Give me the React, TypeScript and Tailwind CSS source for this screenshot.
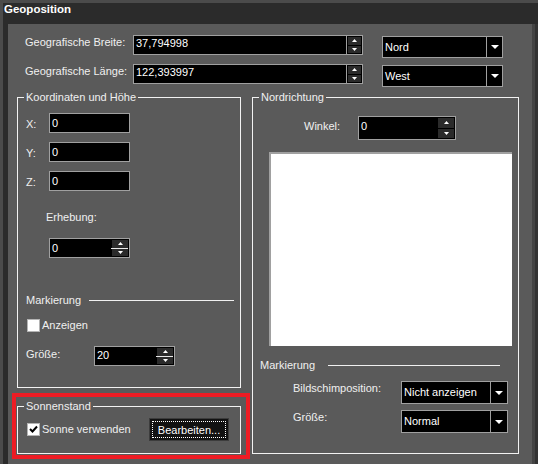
import React from 'react';

type Div = 'gap' | 'line';

const Arrow = ({ up }: { up?: boolean }) => (
  <svg width="5" height="3" viewBox="0 0 5 3">
    <path d={up ? 'M2.5 0L5 3H0Z' : 'M0 0H5L2.5 3Z'} fill="#fff" />
  </svg>
);

const DropArrow = () => (
  <svg width="8" height="4" viewBox="0 0 8 4">
    <path d="M0 0H8L4 4Z" fill="#fff" />
  </svg>
);

interface SpinProps {
  value: string;
  className: string;
  pad?: string;
  sep?: boolean;
  divider?: Div;
  btnW?: string;
}

const Spin: React.FC<SpinProps> = ({ value, className, pad = 'pt-[2px]', sep, divider = 'gap', btnW = 'w-[16px]' }) => (
  <div className={`flex bg-black border border-[#a0a0a0] ${className}`}>
    <div className={`flex-1 pl-[2px] leading-[14px] text-white ${pad}`}>{value}</div>
    <div className={`flex flex-col ${btnW} ${sep ? 'border-l border-[#a0a0a0] p-[1px]' : 'py-[1px] pr-[1px]'} ${divider === 'gap' ? 'gap-[1px]' : ''}`}>
      <div className="flex-1 bg-[#2b2b2b] flex items-center justify-center">
        <Arrow up />
      </div>
      {divider === 'line' && <div className="h-[1px] -ml-[1px] bg-[#e8e8e8]" />}
      <div className="flex-1 bg-[#2b2b2b] flex items-center justify-center">
        <Arrow />
      </div>
    </div>
  </div>
);

const Field = ({ value }: { value: string }) => (
  <div className="w-[81px] h-[20px] bg-black border border-[#a0a0a0] pl-[2px] pt-[2px] leading-[14px] text-white">
    {value}
  </div>
);

const Combo = ({ value, className, arrowW }: { value: string; className: string; arrowW: string }) => (
  <div className={`flex bg-black ${className}`}>
    <div className="flex-1 border border-[#a0a0a0] pl-[2px] pt-[3px] leading-[14px] text-white">{value}</div>
    <div className={`${arrowW} border border-l-0 border-[#a0a0a0] flex items-center justify-center`}>
      <DropArrow />
    </div>
  </div>
);

const Check = ({ checked }: { checked?: boolean }) => (
  <div className="w-[13px] h-[13px] shrink-0 bg-white border border-[#b4b4b4] flex items-center justify-center">
    {checked && (
      <svg width="9" height="8" viewBox="0 0 9 8">
        <path d="M1 4L3.5 6.5L8 1.5" stroke="#000" strokeWidth="2" fill="none" />
      </svg>
    )}
  </div>
);

const Group: React.FC<{ title: string; className: string; children?: React.ReactNode }> = ({ title, className, children }) => (
  <div className={`relative border border-[#f2f2f2] ${className}`}>
    <span className="absolute -top-[8px] left-[6px] px-[2px] bg-[#5a5a5a] leading-[14px] text-[#f0f0f0]">{title}</span>
    {children}
  </div>
);

const TopRow = ({ label, value, dir }: { label: string; value: string; dir: string }) => (
  <div className="flex items-start">
    <span className="w-[108px] ml-[17px] leading-[14px]">{label}</span>
    <Spin value={value} className="w-[230px] h-[20px]" pad="pt-0" sep btnW="w-[16px]" />
    <Combo value={dir} className="ml-[19px] mt-[1px] w-[121px] h-[22px]" arrowW="w-[16px]" />
  </div>
);

export default function App() {
  return (
    <div className="w-[538px] h-[464px] overflow-hidden flex flex-col bg-[#2b2b2b] border-t-[3px] border-l-[3px] border-[#4b4b4b] font-['Liberation_Sans',Arial,sans-serif] text-[11px] text-[#f0f0f0] select-none">
      <div className="h-[21px] shrink-0 pl-[1px] text-[11.5px] font-bold leading-[12px] text-white">Geoposition</div>

      <div className="flex flex-1 min-h-0">
        <div className="w-[5px] bg-[#2b2b2b]" />

        <div className="w-[524px] bg-[#5a5a5a] pt-[11px]">
          <div className="flex flex-col gap-[6px]">
            <TopRow label="Geografische Breite:" value="37,794998" dir="Nord" />
            <TopRow label="Geografische Länge:" value="122,393997" dir="West" />
          </div>

          <div className="flex items-start mt-[10px]">
            <div className="ml-[4px] w-[238px] flex flex-col">
              <Group title="Koordinaten und Höhe" className="ml-[5px] w-[224px] h-[291px]">
                <div className="pt-[15px] pl-[8px] flex flex-col">
                  {['X:', 'Y:', 'Z:'].map((l, i) => (
                    <div key={l} className={`flex items-start ${i ? 'mt-[9px]' : ''}`}>
                      <span className="w-[23px] mt-[4px] leading-[14px]">{l}</span>
                      <Field value="0" />
                    </div>
                  ))}
                  <span className="ml-[20px] mt-[19px] leading-[14px]">Erhebung:</span>
                  <Spin value="0" className="ml-[23px] mt-[14px] w-[81px] h-[20px]" divider="line" btnW="w-[17px]" />
                  <div className="flex items-center mt-[35px]">
                    <span className="w-[63px] leading-[14px]">Markierung</span>
                    <div className="w-[145px] h-[1px] bg-[#f0f0f0]" />
                  </div>
                  <div className="flex items-center mt-[11px] ml-[1px]">
                    <Check />
                    <span className="ml-[2px] leading-[14px]">Anzeigen</span>
                  </div>
                  <div className="flex items-start mt-[14px]">
                    <span className="w-[68px] mt-[1px] leading-[14px]">Größe:</span>
                    <Spin value="20" className="w-[81px] h-[20px]" pad="pt-[1px]" divider="line" btnW="w-[17px]" />
                  </div>
                </div>
              </Group>

              <div className="mt-[5px] w-[238px] h-[66px] border-[4px] border-[#ed1c24]">
                <Group title="Sonnenstand" className="ml-[1px] mt-[9px] w-[224px] h-[48px]">
                  <div className="flex items-start pt-[11px] pl-[9px]">
                    <div className="w-[122px] mt-[4px] flex items-center">
                      <Check checked />
                      <span className="ml-[2px] leading-[14px]">Sonne verwenden</span>
                    </div>
                    <div className="w-[80px] h-[23px] bg-[#121212] border border-[#3c3c3c] p-[2px]">
                      <div className="h-full border border-dotted border-white flex items-center justify-center leading-[14px] text-white">
                        Bearbeiten...
                      </div>
                    </div>
                  </div>
                </Group>
              </div>
            </div>

            <Group title="Nordrichtung" className="ml-[2px] w-[267px] h-[357px]">
              <div className="pt-[18px] flex flex-col">
                <div className="flex items-start ml-[51px]">
                  <span className="w-[54px] mt-[3px] leading-[14px]">Winkel:</span>
                  <Spin value="0" className="w-[98px] h-[24px]" pad="pt-[2px]" btnW="w-[17px]" />
                </div>
                <div className="ml-[16px] mt-[12px] w-[243px] h-[194px] bg-white border-t-2 border-l-2 border-[#a0a0a0]" />
                <div className="flex items-center ml-[7px] mt-[12px]">
                  <span className="w-[68px] leading-[14px]">Markierung</span>
                  <div className="w-[172px] h-[1px] bg-[#f0f0f0]" />
                </div>
                <div className="flex items-start ml-[40px] mt-[9px]">
                  <span className="w-[108px] leading-[14px]">Bildschimposition:</span>
                  <Combo value="Nicht anzeigen" className="w-[107px] h-[23px]" arrowW="w-[17px]" />
                </div>
                <div className="flex items-start ml-[40px] mt-[6px]">
                  <span className="w-[108px] leading-[14px]">Größe:</span>
                  <Combo value="Normal" className="w-[107px] h-[23px]" arrowW="w-[17px]" />
                </div>
              </div>
            </Group>
          </div>
        </div>

        <div className="w-[3px] bg-[#444444]" />
        <div className="flex-1 bg-[#333333]" />
      </div>
    </div>
  );
}
